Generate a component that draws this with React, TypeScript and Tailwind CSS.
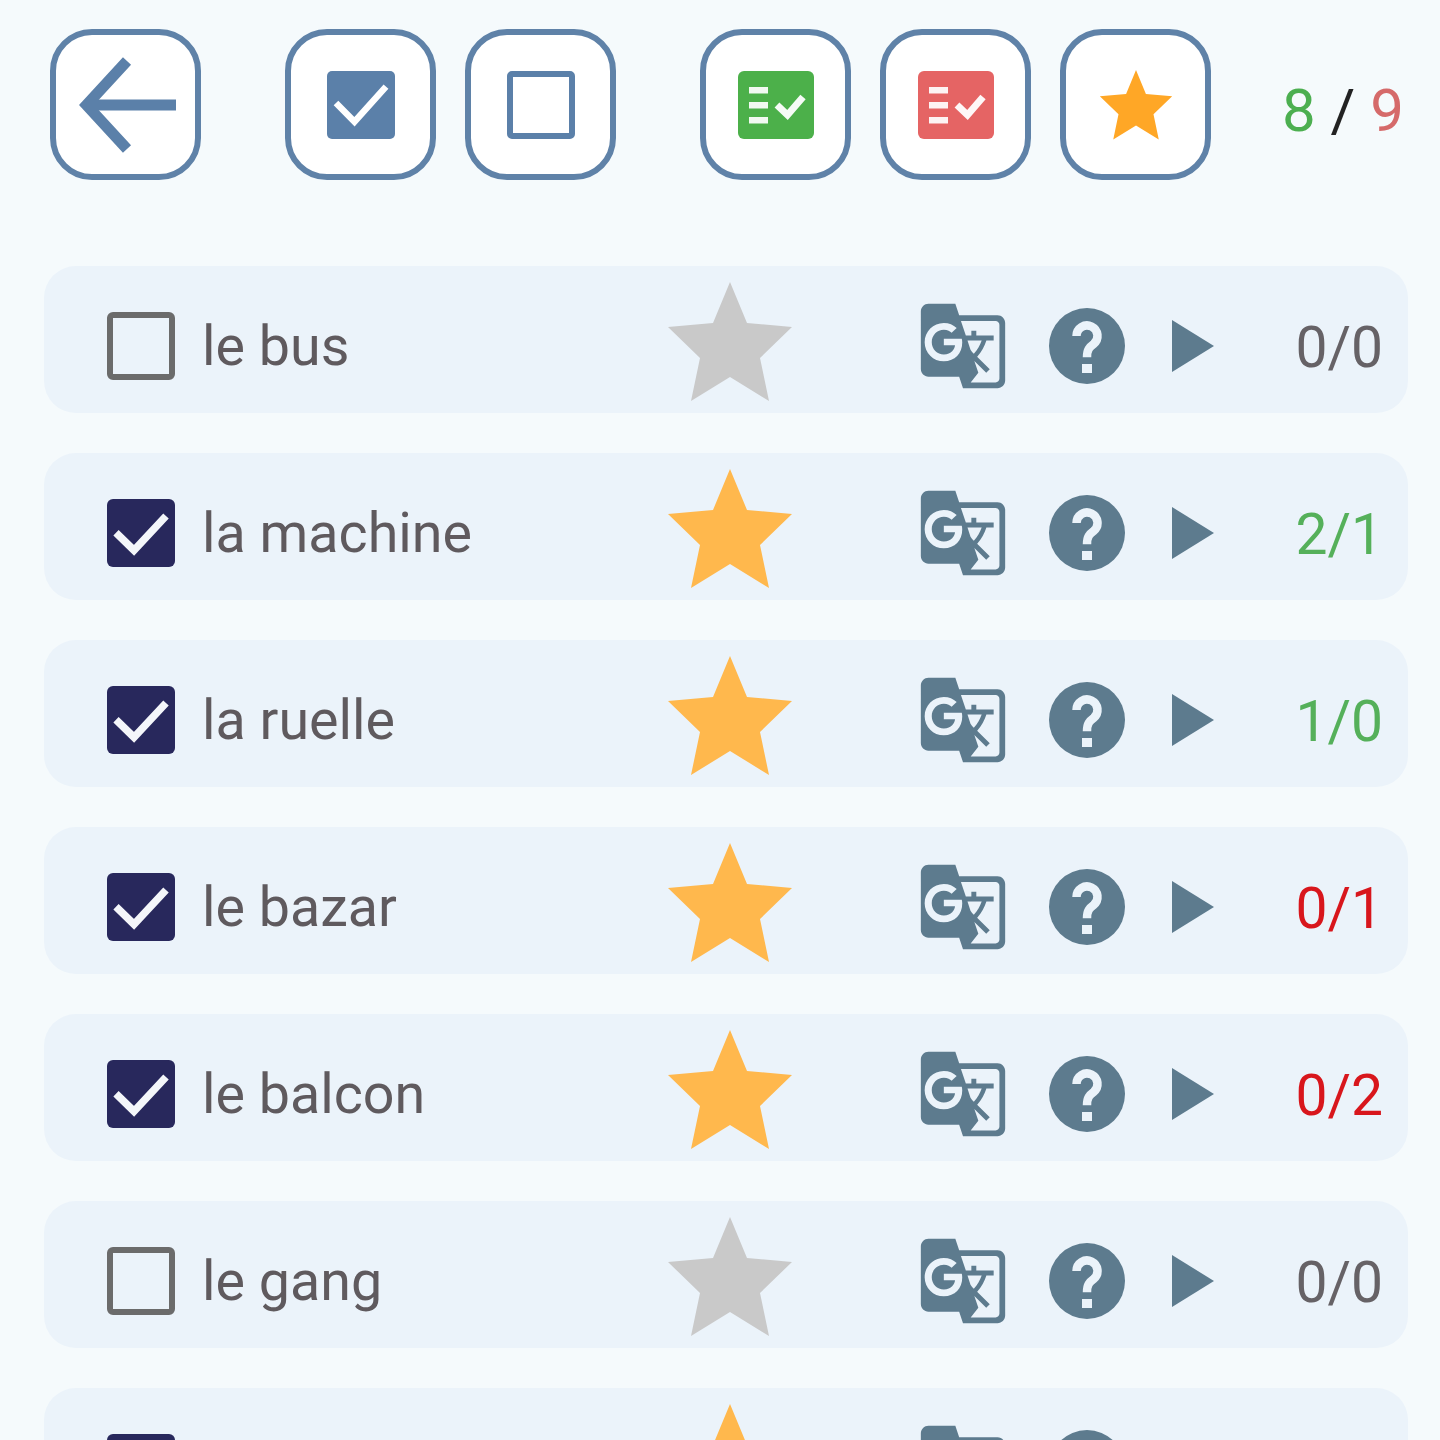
import { MdGTranslate } from "react-icons/md";

const STAR = "62,0 79,41 124,45 92,76 101,119 62,95 23,119 32,76 0,45 45,41";

function Star({ className, fill }: { className: string; fill: string }) {
  return (
    <svg viewBox="0 0 124 120" className={className} fill={fill}>
      <polygon points={STAR} />
    </svg>
  );
}

function HeaderButton({ children, className = "" }: { children: React.ReactNode; className?: string }) {
  return (
    <div className={`flex h-[151px] w-[151px] shrink-0 items-center justify-center rounded-[42px] border-[6px] border-[#5f82a8] bg-white ${className}`}>
      {children}
    </div>
  );
}

function ListIcon({ fill }: { fill: string }) {
  return (
    <svg viewBox="0 0 76 68" className="h-[68px] w-[76px]">
      <rect width="76" height="68" rx="6" fill={fill} />
      <rect x="11" y="16" width="19" height="6.5" fill="#fff" opacity="0.92" />
      <rect x="11" y="31" width="19" height="6.5" fill="#fff" opacity="0.92" />
      <rect x="11" y="46" width="19" height="6.5" fill="#fff" opacity="0.92" />
      <path d="M39 34 L49.5 44 L65 26" fill="none" stroke="#fff" strokeWidth="7" opacity="0.95" />
    </svg>
  );
}

function HelpIcon() {
  return (
    <svg viewBox="0 0 76 76" className="ml-[40px] h-[76px] w-[76px] shrink-0">
      <circle cx="38" cy="38" r="38" fill="#5d7b8e" />
      <path d="M27.5 28 a10.5 10.5 0 1 1 17 8.2 c-4 3 -6.5 5 -6.5 13" fill="none" stroke="#ebf3fa" strokeWidth="8.5" />
      <rect x="33" y="56" width="10" height="9" fill="#ebf3fa" />
    </svg>
  );
}

type Row = { word: string; checked: boolean; count: string; color: string };

const rows: Row[] = [
  { word: "le bus", checked: false, count: "0/0", color: "text-[#666266]" },
  { word: "la machine", checked: true, count: "2/1", color: "text-[#55b05a]" },
  { word: "la ruelle", checked: true, count: "1/0", color: "text-[#55b05a]" },
  { word: "le bazar", checked: true, count: "0/1", color: "text-[#d8161c]" },
  { word: "le balcon", checked: true, count: "0/2", color: "text-[#d8161c]" },
  { word: "le gang", checked: false, count: "0/0", color: "text-[#666266]" },
  { word: "", checked: true, count: "", color: "text-[#666266]" },
];

function WordRow({ row }: { row: Row }) {
  return (
    <div className="flex h-[147px] shrink-0 items-center rounded-[32px] bg-[#ebf3fa] pl-[63px] pr-[25px] pt-[13px]">
      {row.checked ? (
        <div className="flex h-[68px] w-[68px] shrink-0 items-center justify-center rounded-[6px] bg-[#28285c]">
          <svg viewBox="0 0 68 68" className="h-[68px] w-[68px]">
            <path d="M9 33.7 L27 51.3 L59 17" fill="none" stroke="#f4f6fa" strokeWidth="7.5" />
          </svg>
        </div>
      ) : (
        <div className="h-[68px] w-[68px] shrink-0 rounded-[6px] border-[6px] border-[#6b6b6b]" />
      )}
      <div className="ml-[27px] w-[466px] shrink-0 pt-[2px] text-[55.6px] leading-none text-[#5f5a5e]">{row.word}</div>
      <Star className="-mt-[8px] h-[120px] w-[124px] shrink-0" fill={row.checked ? "#ffb84d" : "#c9c9c9"} />
      <MdGTranslate className="ml-[125px] shrink-0 text-[92px] text-[#5d7b8e]" />
      <HelpIcon />
      <svg viewBox="0 0 42 52" className="ml-[47px] h-[52px] w-[42px] shrink-0" fill="#5d7b8e">
        <polygon points="0,0 42,26 0,52" />
      </svg>
      <div className={`flex-1 pt-[2px] text-right text-[57px] leading-none ${row.color}`}>{row.count}</div>
    </div>
  );
}

export default function App() {
  return (
    <div className="h-[1440px] overflow-hidden bg-[#f5fafc] font-['Roboto',sans-serif]">
      <div className="flex items-center pl-[50px] pt-[29px]">
        <HeaderButton>
          <svg viewBox="0 0 100 100" className="h-[100px] w-[100px]" fill="none" stroke="#5b80a9" strokeWidth="11">
            <path d="M51 6 L10.5 50 L51 94" />
            <path d="M10.5 50 H100" />
          </svg>
        </HeaderButton>
        <HeaderButton className="ml-[84px]">
          <div className="flex h-[68px] w-[68px] items-center justify-center rounded-[5px] bg-[#5b80a9]">
            <svg viewBox="0 0 68 68" className="h-[68px] w-[68px]">
              <path d="M9 32 L27.5 50.7 L59 15.7" fill="none" stroke="#fff" strokeWidth="6.5" />
            </svg>
          </div>
        </HeaderButton>
        <HeaderButton className="ml-[29px]">
          <div className="h-[68px] w-[68px] rounded-[5px] border-[6px] border-[#5b80a9]" />
        </HeaderButton>
        <HeaderButton className="ml-[84px]">
          <ListIcon fill="#4cb04a" />
        </HeaderButton>
        <HeaderButton className="ml-[29px]">
          <ListIcon fill="#e56464" />
        </HeaderButton>
        <HeaderButton className="ml-[29px]">
          <Star className="h-[70px] w-[74px]" fill="#ffa726" />
        </HeaderButton>
        <div className="ml-[71px] mt-[12px] whitespace-pre text-[60px] leading-none">
          <span className="text-[#4caf50]">8</span>
          <span className="text-[#222]"> / </span>
          <span className="text-[#d56a6a]">9</span>
        </div>
      </div>
      <div className="ml-[44px] mr-[32px] mt-[86px] flex flex-col gap-[40px]">
        {rows.map((row, i) => (
          <WordRow key={i} row={row} />
        ))}
      </div>
    </div>
  );
}
